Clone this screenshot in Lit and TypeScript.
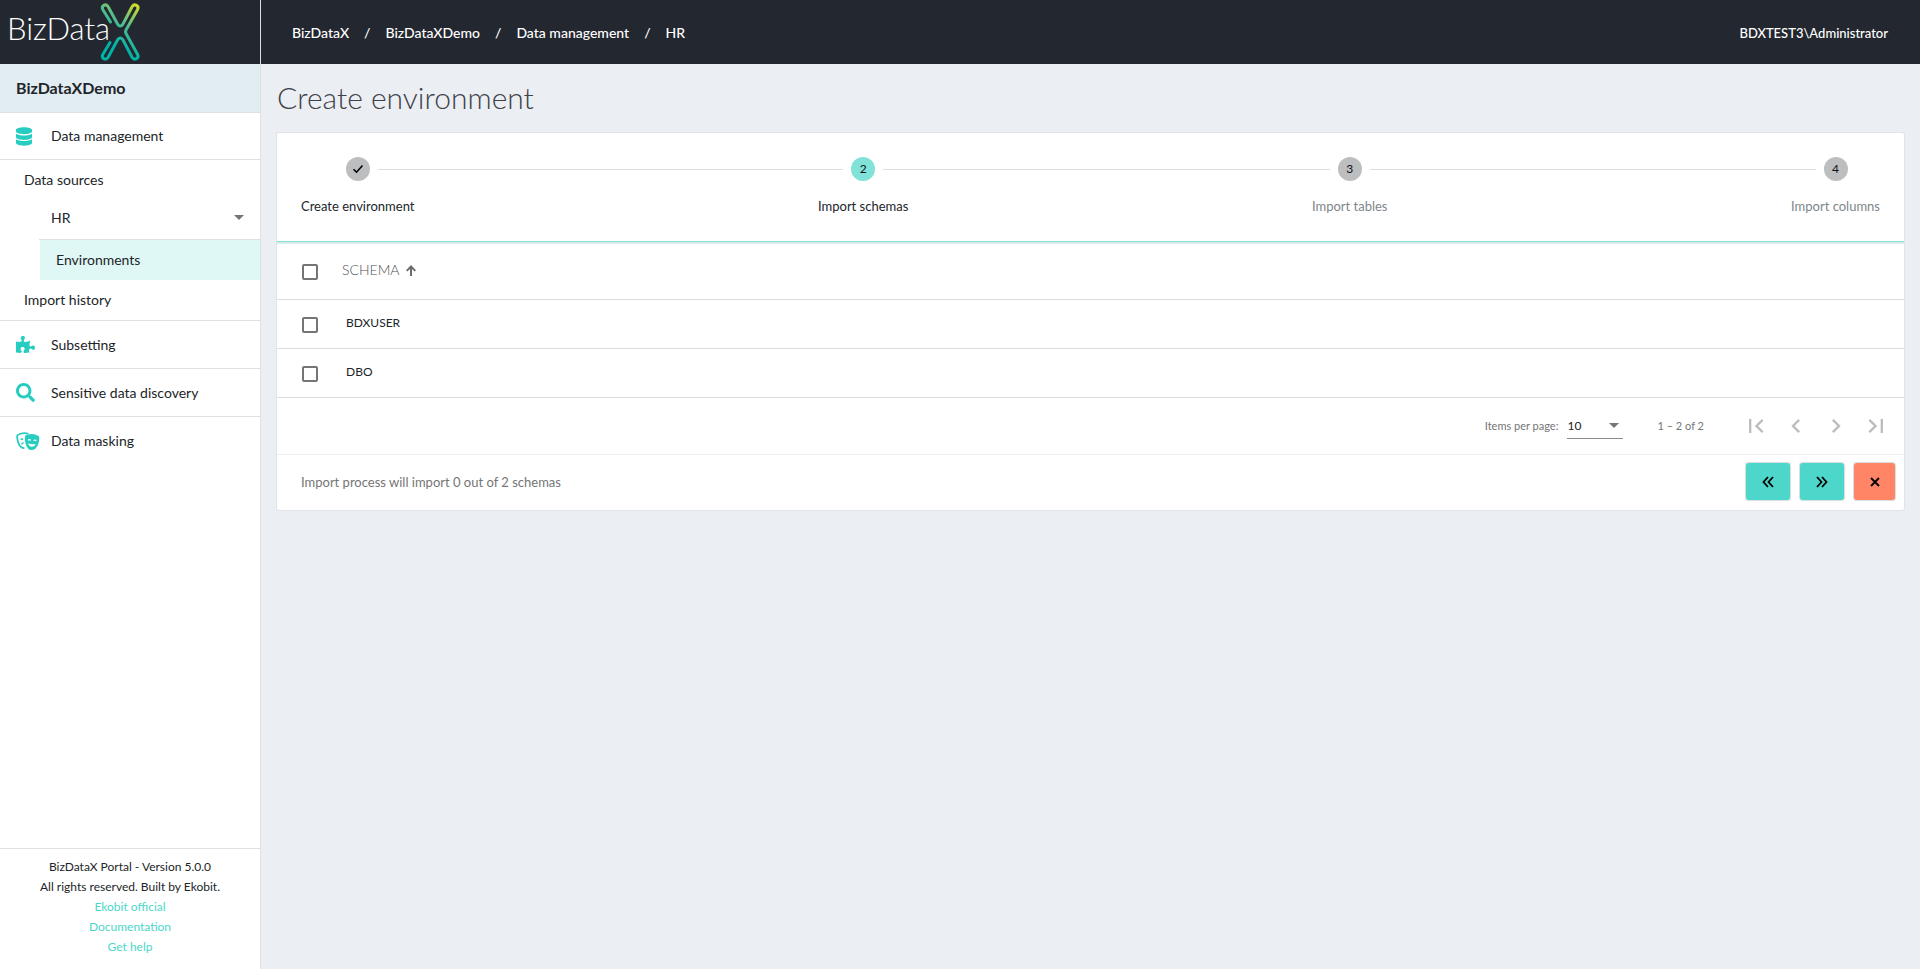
import { LitElement, html, css, svg, nothing } from "lit";
import { customElement } from "lit/decorators.js";
import { classMap } from "lit/directives/class-map.js";

const icon = (d: string, box: string, cls: string) =>
  html`<svg class=${cls} viewBox=${box} aria-hidden="true">${svg`<path d=${d}></path>`}</svg>`;

const ICONS = {
  database:
    "M448 73v45c0 40.300-100.300 73-224 73S0 158.300 0 118V73C0 32.700 100.300 0 224 0s224 32.700 224 73zM448 176v102c0 40.300-100.300 73-224 73S0 318.300 0 278V176c48.100 33.100 136.200 48.600 224 48.600S399.900 209.100 448 176zm0 160v103c0 40.300-100.300 73-224 73S0 479.300 0 439V336c48.100 33.100 136.200 48.600 224 48.600S399.900 369.100 448 336z",
  puzzle:
    "M519.442 288.651c-41.519 0-59.500 31.593-82.058 31.593C377.409 320.244 432 144 432 144s-196.288 80-196.288-3.297c0-35.827 36.288-46.250 36.288-85.985C272 19.216 243.885 0 210.539 0c-34.654 0-66.366 18.891-66.366 56.346 0 41.364 31.711 59.277 31.711 81.750C175.885 207.719 0 166.758 0 166.758v333.237s178.635 41.047 178.635-28.662c0-22.473-40-40.107-40-81.471 0-37.456 29.250-56.346 63.577-56.346 33.673 0 61.788 19.216 61.788 54.717 0 39.735-36.288 50.158-36.288 85.985 0 60.803 129.675 25.730 181.230 25.730 0 0-34.725-120.101 25.827-120.101 35.962 0 46.423 36.152 86.308 36.152C556.712 416 576 387.990 576 354.443c0-34.199-18.962-65.792-56.558-65.792z",
  search:
    "M505 442.700 405.300 343c-4.500-4.500-10.600-7-17-7H372c27.600-35.300 44-79.700 44-128C416 93.100 322.900 0 208 0S0 93.100 0 208s93.100 208 208 208c48.300 0 92.700-16.400 128-44v16.300c0 6.400 2.500 12.500 7 17l99.700 99.700c9.400 9.400 24.600 9.400 33.900 0l28.300-28.300c9.400-9.400 9.400-24.600.1-34zM208 336c-70.700 0-128-57.200-128-128 0-70.700 57.200-128 128-128 70.700 0 128 57.200 128 128 0 70.700-57.200 128-128 128z",
  first: "M18.410 16.590 13.820 12l4.590-4.590L17 6l-6 6 6 6zM6 6h2v12H6z",
  prev: "M15.410 7.410 14 6l-6 6 6 6 1.410-1.410L10.830 12z",
  next: "M10 6 8.590 7.410 13.170 12l-4.580 4.590L10 18l6-6z",
  last: "M5.590 7.410 10.180 12l-4.590 4.590L7 18l6-6-6-6zM16 6h2v12h-2z",
  caret: "M0 0h10L5 5z",
  sortUp: "M4 11V4L1.400 6.600 0 5.200 5 0l5 5.200-1.400 1.400L6 4v7z",
};

const masks = html`<svg class="icon masks" viewBox="0 0 24 19" aria-hidden="true">
  <path class="outline" d="M1 3.500C4.500 1 8.500.600 12.500 1.800M1 3.500c.3 5 1.500 9.500 4 11.500 1 .8 2 1.200 3.500 1.200" />
  <path d="M4.500 6.800l2.600-.6.200 1.500-2.600.5zM5 11.400l2.600-1.400v1.800l-2.200 1z" />
  <path d="M9.300 3.600c4.700-2.400 9.200-1.900 13.900.900.500 5-1.200 10.200-4.500 12.700-1.500 1.100-4 1-5.700.200-3.400-2.600-4.700-8.600-3.700-13.800z" />
  <path class="face" d="M12 8.300c.8-1 2-1 2.800.1M17.600 8.600c.9-.9 2-.8 2.600.3" />
  <path class="smile" d="M11.800 11.300c2.500 1 5 1.200 7.700.6-.8 3.600-6.300 3.900-7.700-.6z" />
</svg>`;

const STEPS = [
  { label: "Create environment", state: "done" },
  { label: "Import schemas", state: "active" },
  { label: "Import tables", state: "todo" },
  { label: "Import columns", state: "todo" },
];

const SCHEMAS = ["BDXUSER", "DBO"];

@customElement("app-root")
export class AppRoot extends LitElement {
  static styles = css`
    :host {
      display: block;
      font: 400 14px/20px Lato, "Open Sans", sans-serif;
      color: #212529;
    }
    *, *::before, *::after { box-sizing: border-box; }
    a { color: inherit; text-decoration: none; }
    button { font: inherit; padding: 0; border: 0; cursor: pointer; }
    .page {
      display: grid;
      grid-template-columns: 261px 1fr;
      grid-template-rows: 64px 1fr;
      min-height: 100vh;
      background: #ebeef3;
    }
    .brand { background: #23272f; border-right: 1px solid #dee0e2; }
    .logo { display: block; width: 150px; height: 64px; }
    .logo-text { font: 300 31px Lato, sans-serif; fill: #fff; }
    .logo-x { fill: none; stroke: url(#x-fill); stroke-width: 3; stroke-linecap: round; stroke-linejoin: round; }
    .topbar {
      display: flex;
      align-items: center;
      justify-content: space-between;
      padding: 2px 32px 0 31px;
      background: #23272f;
      color: #fff;
      font-weight: 500;
    }
    .crumbs { display: flex; gap: 15px; margin: 0; padding: 0; list-style: none; }
    .user { font-size: 13px; }

    .sidebar {
      display: flex;
      flex-direction: column;
      background: #fff;
      border-right: 1px solid #dee0e2;
    }
    .project {
      height: 49px;
      padding: 14px 16px;
      background: #e1edf2;
      border-bottom: 1px solid #e0e0e0;
      font-size: 16px;
      font-weight: 700;
    }
    .item { display: flex; align-items: center; height: 48px; padding-left: 16px; border-bottom: 1px solid #e0e0e0; }
    .item.first { height: 47px; }
    .item.final { border-bottom: 0; }
    .slot { display: flex; width: 35px; }
    .icon { display: block; fill: #26cdc0; width: 19px; height: 19px; }
    .icon.db { width: 16px; }
    .icon.masks { width: 24px; }
    .outline { fill: none; stroke: #26cdc0; stroke-width: 1.8; }
    .face { fill: none; stroke: #fff; stroke-width: 1.2; }
    .smile { fill: #fff; }
    .group { border-bottom: 1px solid #e0e0e0; }
    .sub { display: flex; align-items: center; height: 40px; padding-left: 24px; }
    .sub.source { margin-left: 39px; padding: 0 16px 4px 12px; justify-content: space-between; border-bottom: 1px solid #e0e0e0; }
    .sub.selected { margin-left: 40px; padding-left: 16px; background: #e0f8f5; }
    .caret { width: 10px; height: 5px; fill: #757575; }
    .about {
      margin-top: auto;
      padding: 8px 0 12px;
      border-top: 1px solid #e0e0e0;
      font-size: 12px;
      text-align: center;
    }
    .about p { margin: 0; }
    .about a { color: #4cd7ca; }

    .content { padding: 15px 16px 0; }
    .title { margin: 0 0 18px; font-size: 30px; line-height: 36px; font-weight: 300; color: #3d4148; }
    .card { background: #fff; border-radius: 2px; box-shadow: 0 0 0 1px #e0e3e7; }
    .card.stepper {
      position: relative;
      display: flex;
      height: 109px;
      margin: 0 0 1px;
      padding: 24px 0 0;
      list-style: none;
      border-bottom: 1px solid #81e2d9;
      border-radius: 2px 2px 0 0;
      box-shadow: 0 0 0 1px #e0e3e7, 0 1px 0 1px #d5f1ee;
    }
    .step { flex: none; text-align: center; font-size: 13px; color: #80868b; }
    .step.active, .step.done { color: #212529; }
    .track { display: flex; align-items: center; gap: 8px; height: 24px; padding: 0; }
    .rail { flex: 1; height: 1px; background: #dcdee0; }
    .step:first-child .rail:first-child, .step:last-child .rail:last-child { background: none; }
    .dot {
      display: grid;
      place-items: center;
      width: 24px;
      height: 24px;
      border-radius: 50%;
      background: #bdbebf;
      color: #111;
      font-size: 12px;
    }
    .active .dot { background: #80e2d9; }
    .check { width: 12px; height: 12px; fill: none; stroke: #000; stroke-width: 1.6; }
    .caption { padding: 15px 24px 0; }
    .join { flex: 1; height: 1px; margin-top: 12px; background: #dcdee0; }

    table { width: 100%; border-collapse: separate; border-spacing: 0; }
    th, td { height: 49px; padding: 0 0 2px; text-align: left; border-bottom: 1px solid #dcdcdc; }
    th { height: 57px; font-weight: 300; }
    .pick { width: 65px; padding: 2px 0 0 25px; }
    .box {
      appearance: none;
      display: block;
      width: 16px;
      height: 16px;
      margin: 0;
      border: 2px solid #757575;
      border-radius: 2px;
      background: #fff;
    }
    .name { padding-left: 4px; font-size: 12px; }
    .sort { display: flex; align-items: center; gap: 6px; background: none; color: #4f5256; }
    .arrow { width: 10px; height: 11px; fill: #6c6c6c; }
    .pager {
      display: flex;
      align-items: center;
      justify-content: flex-end;
      height: 57px;
      padding-right: 8px;
      border-bottom: 1px solid #eee;
      font-size: 11px;
      color: #757575;
    }
    .pick-size { display: grid; align-items: center; width: 56px; height: 25px; margin: 0 34px 0 9px; border-bottom: 1px solid #8c8c8c; }
    .pick-size > * { grid-area: 1 / 1; }
    .size { appearance: none; width: 56px; height: 24px; padding: 0; border: 0; background: none; color: #212121; font: inherit; font-size: 12px; }
    .pick-size .caret { justify-self: end; margin-right: 4px; pointer-events: none; }
    .range { margin-right: 32px; }
    .nav { display: grid; place-items: center; width: 40px; height: 40px; background: none; }
    .chevron { width: 28px; height: 28px; fill: #bdbdbd; }
    .actions { display: flex; align-items: center; gap: 10px; height: 55px; padding: 0 9px 2px 24px; }
    .summary { flex: 1; margin: 0; font-size: 13px; color: #757575; }
    .action { display: grid; place-items: center; width: 44px; height: 37px; border-radius: 3px; background: #4cd7ca; box-shadow: 0 0 1px 1px #d5dddd; }
    .action.cancel { width: 41px; background: #ff8566; }
    .glyph { width: 12px; height: 12px; fill: none; stroke: #000; stroke-width: 1.8; }
  `;

  private action(label: string, d: string, cancel = false) {
    return html`<button class=${classMap({ action: true, cancel })} aria-label=${label}>${icon(d, "0 0 12 12", "glyph")}</button>`;
  }

  private pageButton(label: string, d: string) {
    return html`<button class="nav" aria-label=${label}>${icon(d, "0 0 24 24", "chevron")}</button>`;
  }

  render() {
    return html`
      <div class="page">
        <a class="brand" href="#" aria-label="BizDataX">
          <svg class="logo" viewBox="0 0 150 64">
            <defs>
              <linearGradient id="x-fill" gradientUnits="userSpaceOnUse" x1="138" y1="4" x2="112" y2="42">
                <stop offset="0" stop-color="#d7e021"></stop>
                <stop offset=".5" stop-color="#55bd8c"></stop>
                <stop offset="1" stop-color="#00b2a8"></stop>
              </linearGradient>
            </defs>
            <text class="logo-text" x="7" y="40">BizData</text>
            <path class="logo-x" d="M110.500 22 102.800 9.500C101 6 105.500 3 108 6.500L117.500 24C119 26.800 121.500 26.800 123 24L132.200 6.500C134.500 3 139.500 6 137.600 9.500L126 30C125.200 31.500 125.200 32 126 33.500L137.600 54.500C139.500 58 134.500 61 132.200 57.500L123 40C121.500 37.200 119 37.200 117.500 40L108 57.500C105.500 61 101 58 102.800 54.500L110 42.500" />
          </svg>
        </a>
        <header class="topbar">
          <ol class="crumbs">
            ${["BizDataX", "BizDataXDemo", "Data management", "HR"].map(
              (c, i) => html`${i ? html`<li aria-hidden="true">/</li>` : nothing}<li><a href="#">${c}</a></li>`
            )}
          </ol>
          <span class="user">BDXTEST3\\Administrator</span>
        </header>
        <nav class="sidebar">
          <a class="project" href="#">BizDataXDemo</a>
          <a class="item first" href="#"><span class="slot">${icon(ICONS.database, "0 0 448 512", "icon db")}</span>Data management</a>
          <div class="group">
            <a class="sub" href="#">Data sources</a>
            <a class="sub source" href="#">HR ${icon(ICONS.caret, "0 0 10 5", "caret")}</a>
            <a class="sub selected" href="#">Environments</a>
            <a class="sub" href="#">Import history</a>
          </div>
          <a class="item" href="#"><span class="slot">${icon(ICONS.puzzle, "0 0 576 512", "icon")}</span>Subsetting</a>
          <a class="item" href="#"><span class="slot">${icon(ICONS.search, "0 0 512 512", "icon")}</span>Sensitive data discovery</a>
          <a class="item final" href="#"><span class="slot">${masks}</span>Data masking</a>
          <footer class="about">
            <p>BizDataX Portal - Version 5.0.0</p>
            <p>All rights reserved. Built by Ekobit.</p>
            <p><a href="#">Ekobit official</a></p>
            <p><a href="#">Documentation</a></p>
            <p><a href="#">Get help</a></p>
          </footer>
        </nav>
        <main class="content">
          <h1 class="title">Create environment</h1>
          <ol class="card stepper">
            ${STEPS.map(
              (s, i) => html`${i ? html`<li class="join" aria-hidden="true"></li>` : nothing}
                <li class="step ${s.state}">
                  <div class="track">
                    <span class="rail"></span>
                    <span class="dot">${s.state === "done" ? icon("M1.500 6.200 4.500 9.200 10.500 2.500", "0 0 12 12", "check") : i + 1}</span>
                    <span class="rail"></span>
                  </div>
                  <div class="caption">${s.label}</div>
                </li>`
            )}
          </ol>
          <section class="card">
            <table>
              <thead>
                <tr>
                  <th class="pick"><input class="box" type="checkbox" aria-label="Select all schemas" /></th>
                  <th><button class="sort">SCHEMA ${icon(ICONS.sortUp, "0 0 10 11", "arrow")}</button></th>
                </tr>
              </thead>
              <tbody>
                ${SCHEMAS.map(
                  (name) => html`<tr>
                    <td class="pick"><input class="box" type="checkbox" id=${name} /></td>
                    <td class="name"><label for=${name}>${name}</label></td>
                  </tr>`
                )}
              </tbody>
            </table>
            <div class="pager">
              <label for="size">Items per page:</label>
              <span class="pick-size">
                <select class="size" id="size"><option>10</option><option>25</option><option>50</option></select>
                ${icon(ICONS.caret, "0 0 10 5", "caret")}
              </span>
              <span class="range">1 – 2 of 2</span>
              ${this.pageButton("First page", ICONS.first)}
              ${this.pageButton("Previous page", ICONS.prev)}
              ${this.pageButton("Next page", ICONS.next)}
              ${this.pageButton("Last page", ICONS.last)}
            </div>
            <div class="actions">
              <p class="summary">Import process will import 0 out of 2 schemas</p>
              ${this.action("Previous step", "M6 1 1.500 6 6 11M11 1 6.500 6 11 11")}
              ${this.action("Next step", "M1 1 5.500 6 1 11M6 1 10.500 6 6 11")}
              ${this.action("Cancel", "M2 2 10 10M10 2 2 10", true)}
            </div>
          </section>
        </main>
      </div>
    `;
  }
}
